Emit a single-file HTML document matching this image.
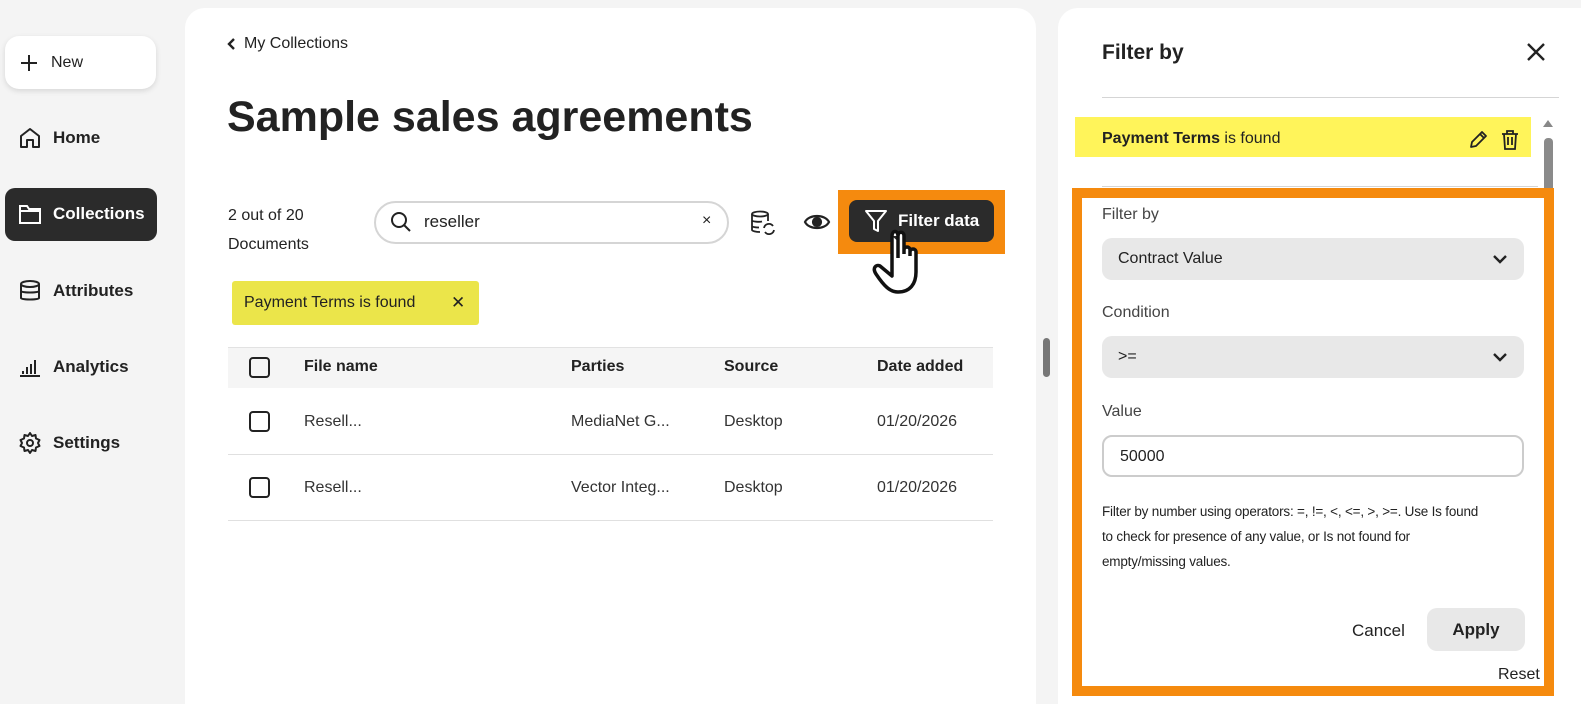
<!DOCTYPE html>
<html><head><meta charset="utf-8"><style>
*{box-sizing:border-box;margin:0;padding:0}
html,body{width:1581px;height:704px;overflow:hidden}
body{background:#f4f4f4;font-family:"Liberation Sans","DejaVu Sans",sans-serif;color:#222;position:relative}
.a{position:absolute}
.nav{left:18px;font-size:17px;font-weight:bold;display:flex;align-items:center;gap:11px}
svg{display:block}
.th{font-weight:bold;font-size:16px}
.cb{width:21px;height:21px;border:2.5px solid #222;border-radius:4px}
.td{font-size:16px;color:#333}
</style></head><body>
<div class="a" style="left:5px;top:36px;width:151px;height:53px;background:#fff;border-radius:14px;box-shadow:0 2px 6px rgba(0,0,0,.12);display:flex;align-items:center;padding-left:14px;gap:12px;font-size:16px">
<svg width="20" height="20"><path d="M10 2V18M2 10H18" stroke="#222" stroke-width="2"/></svg>New</div>
<div class="a nav" style="top:126px"><svg width="24" height="24" fill="none" stroke="#222" stroke-width="2"><path d="M3 10L12 3 21 10V21H15V14H9V21H3Z" stroke-linejoin="round"/></svg>Home</div>
<div class="a" style="left:5px;top:188px;width:152px;height:53px;background:#2b2b2b;border-radius:10px"></div>
<div class="a nav" style="top:203px;color:#fff"><svg width="24" height="22" fill="none" stroke="#fff" stroke-width="2"><path d="M2 3H9L11 6H22V20H2Z"/><path d="M2 8H22"/></svg>Collections</div>
<div class="a nav" style="top:279px"><svg width="24" height="24" fill="none" stroke="#222" stroke-width="2"><ellipse cx="12" cy="5" rx="9" ry="3"/><path d="M3 5V19C3 21 21 21 21 19V5M3 12C3 14 21 14 21 12"/></svg>Attributes</div>
<div class="a nav" style="top:355px"><svg width="24" height="24" fill="none" stroke="#222" stroke-width="2"><path d="M2 21H22M5 19V16M9 19V12M13 19V9M17 19V5"/></svg>Analytics</div>
<div class="a nav" style="top:431px"><svg width="24" height="24" fill="none" stroke="#222" stroke-width="2"><circle cx="12" cy="12" r="3"/><path d="M12 2L14 5 17.5 4 18 7.5 21.5 9 20 12 21.5 15 18 16.5 17.5 20 14 19 12 22 10 19 6.5 20 6 16.5 2.5 15 4 12 2.5 9 6 7.5 6.5 4 10 5Z" stroke-linejoin="round"/></svg>Settings</div>
<div class="a" style="left:185px;top:8px;width:851px;height:720px;background:#fff;border-radius:20px"></div>
<div class="a" style="left:226px;top:35px;font-size:16px;display:flex;align-items:center;gap:8px"><svg width="10" height="14"><path d="M8 2L3 7 8 12" fill="none" stroke="#222" stroke-width="2.4"/></svg>My Collections</div>
<div class="a" style="left:227px;top:93px;font-size:43px;font-weight:bold;color:#222">Sample sales agreements</div>
<div class="a" style="left:228px;top:201px;font-size:16px;line-height:29px">2 out of 20<br>Documents</div>
<div class="a" style="left:374px;top:201px;width:355px;height:43px;border:2px solid #d5d5d5;border-radius:22px"></div>
<svg class="a" style="left:390px;top:211px" width="22" height="22" fill="none" stroke="#222" stroke-width="2"><circle cx="9" cy="9" r="7"/><path d="M14 14L20 20"/></svg>
<div class="a" style="left:424px;top:212px;font-size:17px">reseller</div>
<div class="a" style="left:702px;top:212px;font-size:16px">×</div>
<svg class="a" style="left:750px;top:210px" width="26" height="26" fill="none" stroke="#222" stroke-width="1.8"><ellipse cx="10" cy="4" rx="8" ry="2.5"/><path d="M2 4V20C2 21 6 22 10 22M18 4V11M2 10C2 12 10 12 12 11.5M2 16C2 17 6 17.5 9 17.5"/><path d="M14 18A5 5 0 0 1 23 16M24 20A5 5 0 0 1 15 22"/></svg>
<svg class="a" style="left:803px;top:211px" width="28" height="22" fill="none" stroke="#222" stroke-width="2.2"><path d="M2 11C6 3 22 3 26 11 22 19 6 19 2 11Z"/><circle cx="14" cy="11" r="4" fill="#222"/></svg>
<div class="a" style="left:838px;top:190px;width:167px;height:64px;background:#f58a0e"></div>
<div class="a" style="left:849px;top:200px;width:145px;height:42px;background:#2b2b2b;border-radius:8px;color:#fff;font-size:17px;font-weight:bold;display:flex;align-items:center;padding-left:49px">Filter data</div>
<svg class="a" style="left:864px;top:209px" width="24" height="26" fill="none" stroke="#fff" stroke-width="2"><path d="M2 2H22L14 12V22L10 20V12Z" stroke-linejoin="round"/></svg>
<svg class="a" style="left:866px;top:228px" width="60" height="68"><path d="M32 30V8C32 3 38 3 38 8V26M38 26V22C38 18 44 18 44 22V28M44 24C44 20 50 20 50 24V44C50 56 44 64 32 64 24 64 18 58 10 46 6 40 10 36 14 38L26 48V8" fill="#fff" stroke="#111" stroke-width="3.5" stroke-linejoin="round"/><path d="M26 8C26 2 32 2 32 8" fill="#fff" stroke="#111" stroke-width="3.5"/></svg>
<div class="a" style="left:232px;top:281px;width:247px;height:44px;background:#ebe54a;border-radius:3px"></div>
<div class="a" style="left:244px;top:294px;font-size:16px">Payment Terms is found</div>
<div class="a" style="left:451px;top:293px;font-size:17px;font-weight:bold">✕</div>
<div class="a" style="left:228px;top:347px;width:765px;height:41px;background:#f5f5f5;border-top:1px solid #e2e2e2"></div>
<div class="a cb" style="left:249px;top:357px"></div>
<div class="a th" style="left:304px;top:358px">File name</div>
<div class="a th" style="left:571px;top:358px">Parties</div>
<div class="a th" style="left:724px;top:358px">Source</div>
<div class="a th" style="left:877px;top:358px">Date added</div>
<div class="a" style="left:228px;top:454px;width:765px;border-top:1px solid #e0e0e0"></div>
<div class="a" style="left:228px;top:520px;width:765px;border-top:1px solid #e0e0e0"></div>
<div class="a cb" style="left:249px;top:411px"></div>
<div class="a td" style="left:304px;top:413px">Resell...</div>
<div class="a td" style="left:571px;top:413px">MediaNet G...</div>
<div class="a td" style="left:724px;top:413px">Desktop</div>
<div class="a td" style="left:877px;top:413px">01/20/2026</div>
<div class="a cb" style="left:249px;top:477px"></div>
<div class="a td" style="left:304px;top:479px">Resell...</div>
<div class="a td" style="left:571px;top:479px">Vector Integ...</div>
<div class="a td" style="left:724px;top:479px">Desktop</div>
<div class="a td" style="left:877px;top:479px">01/20/2026</div>
<div class="a" style="left:1043px;top:338px;width:7px;height:39px;background:#777;border-radius:4px"></div>
<div class="a" style="left:1058px;top:8px;width:540px;height:720px;background:#fff;border-radius:20px 0 0 0"></div>
<div class="a" style="left:1102px;top:41px;font-size:21px;font-weight:bold">Filter by</div>
<svg class="a" style="left:1526px;top:42px" width="20" height="20"><path d="M2 2L18 18M18 2L2 18" stroke="#222" stroke-width="2.4"/></svg>
<div class="a" style="left:1102px;top:97px;width:457px;border-top:1.5px solid #d5d5d5"></div>
<div class="a" style="left:1075px;top:117px;width:456px;height:40px;background:#fff45a"></div>
<div class="a" style="left:1102px;top:130px;font-size:16px"><b>Payment Terms</b> is found</div>
<svg class="a" style="left:1467px;top:129px" width="22" height="22" fill="none" stroke="#222" stroke-width="1.8"><path d="M4 18L5 13 15 3 19 7 9 17Z M13 5L17 9" stroke-linejoin="round"/></svg>
<svg class="a" style="left:1500px;top:129px" width="22" height="22" fill="none" stroke="#222" stroke-width="1.8"><path d="M2 5H18M7 5V2H13V5M4 5L5 20H15L16 5M8 8V16M12 8V16"/></svg>
<div class="a" style="left:1102px;top:186px;width:436px;border-top:1.5px solid #d5d5d5"></div>
<svg class="a" style="left:1541px;top:117px" width="14" height="12"><path d="M2 10L7 3 12 10Z" fill="#888"/></svg>
<div class="a" style="left:1544px;top:138px;width:9px;height:190px;background:#8a8a8a;border-radius:4px"></div>
<div class="a" style="left:1072px;top:188px;width:482px;height:508px;border:10px solid #f58a0e"></div>
<div class="a" style="left:1102px;top:206px;font-size:16px;color:#444">Filter by</div>
<div class="a" style="left:1102px;top:238px;width:422px;height:42px;background:#e8e8e8;border-radius:10px;font-size:16px;padding:12px 16px">Contract Value</div>
<svg class="a" style="left:1492px;top:253px" width="16" height="12"><path d="M2 3L8 9 14 3" fill="none" stroke="#222" stroke-width="2.4"/></svg>
<div class="a" style="left:1102px;top:304px;font-size:16px;color:#444">Condition</div>
<div class="a" style="left:1102px;top:336px;width:422px;height:42px;background:#e8e8e8;border-radius:10px;font-size:16px;padding:12px 16px">&gt;=</div>
<svg class="a" style="left:1492px;top:351px" width="16" height="12"><path d="M2 3L8 9 14 3" fill="none" stroke="#222" stroke-width="2.4"/></svg>
<div class="a" style="left:1102px;top:403px;font-size:16px;color:#444">Value</div>
<div class="a" style="left:1102px;top:435px;width:422px;height:42px;border:2px solid #ccc;border-radius:10px;font-size:16px;padding:11px 16px">50000</div>
<div class="a" style="left:1102px;top:499px;font-size:13.5px;line-height:25px;color:#222;letter-spacing:-0.2px;white-space:nowrap">Filter by number using operators: =, !=, &lt;, &lt;=, &gt;, &gt;=. Use Is found<br>to check for presence of any value, or Is not found for<br>empty/missing values.</div>
<div class="a" style="left:1352px;top:621px;font-size:17px">Cancel</div>
<div class="a" style="left:1427px;top:608px;width:98px;height:43px;background:#e8e8e8;border-radius:10px;font-size:17px;font-weight:bold;text-align:center;line-height:43px">Apply</div>
<div class="a" style="left:1498px;top:666px;font-size:16px">Reset</div>
</body></html>
